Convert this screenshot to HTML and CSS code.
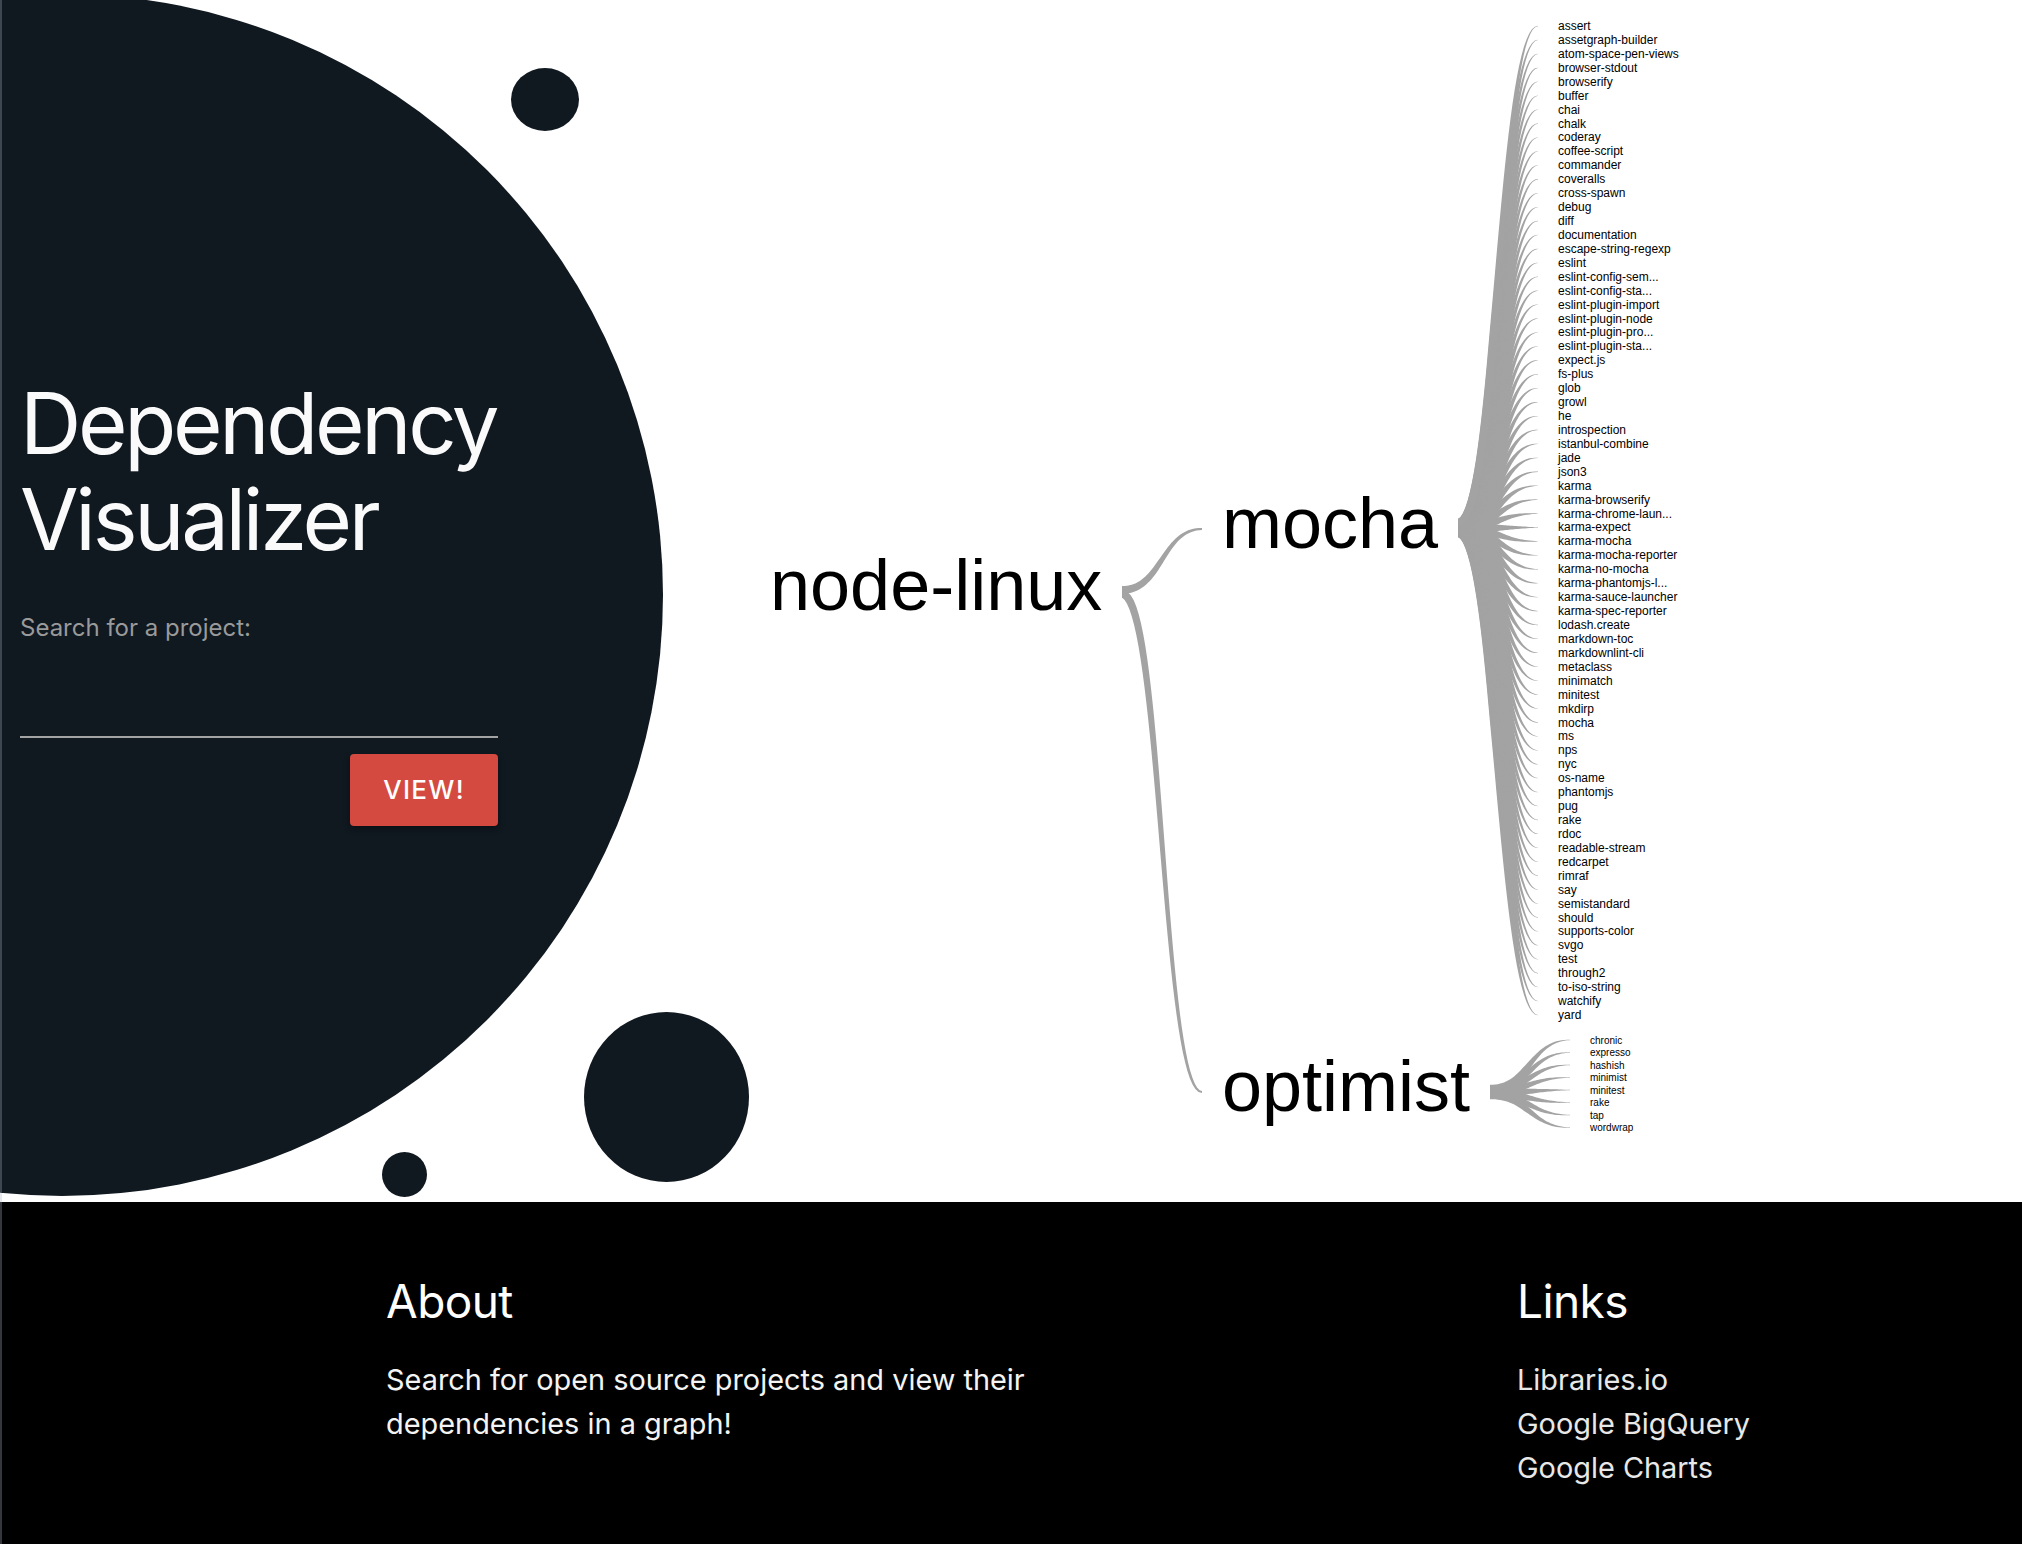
FILE: index.html
```html
<!DOCTYPE html>
<html>
<head>
    <meta charset="utf-8" />
    <meta name="viewport" content="width=device-width, initial-scale=1.0">
    <title>Dependency Visualizer</title>
    <link rel="stylesheet" href="styles.css">
</head>
<body>

    <main class="hero">
        <div class="blob blob-main"></div>
        <div class="blob blob-top"></div>
        <div class="blob blob-large"></div>
        <div class="blob blob-small"></div>

        <form class="search">
            <h1 class="search-title">Dependency Visualizer</h1>
            <label class="search-label" for="project">Search for a project:</label>
            <input class="search-input" id="project" type="text">
            <button class="search-button" type="button">VIEW!</button>
        </form>

        <svg class="chart" id="chart" viewBox="722 0 1300 1202" width="1300" height="1202">
            <text class="node" x="770" y="610">node-linux</text>
            <text class="node" x="1222" y="548">mocha</text>
            <text class="node" x="1222" y="1111">optimist</text>

            <g class="leaves" data-source="1458,528" data-spread="0.16" data-end="1538" data-x="1558" data-y="26" data-step="13.93" data-scale="1">
                <text>assert</text>
                <text>assetgraph-builder</text>
                <text>atom-space-pen-views</text>
                <text>browser-stdout</text>
                <text>browserify</text>
                <text>buffer</text>
                <text>chai</text>
                <text>chalk</text>
                <text>coderay</text>
                <text>coffee-script</text>
                <text>commander</text>
                <text>coveralls</text>
                <text>cross-spawn</text>
                <text>debug</text>
                <text>diff</text>
                <text>documentation</text>
                <text>escape-string-regexp</text>
                <text>eslint</text>
                <text>eslint-config-sem...</text>
                <text>eslint-config-sta...</text>
                <text>eslint-plugin-import</text>
                <text>eslint-plugin-node</text>
                <text>eslint-plugin-pro...</text>
                <text>eslint-plugin-sta...</text>
                <text>expect.js</text>
                <text>fs-plus</text>
                <text>glob</text>
                <text>growl</text>
                <text>he</text>
                <text>introspection</text>
                <text>istanbul-combine</text>
                <text>jade</text>
                <text>json3</text>
                <text>karma</text>
                <text>karma-browserify</text>
                <text>karma-chrome-laun...</text>
                <text>karma-expect</text>
                <text>karma-mocha</text>
                <text>karma-mocha-reporter</text>
                <text>karma-no-mocha</text>
                <text>karma-phantomjs-l...</text>
                <text>karma-sauce-launcher</text>
                <text>karma-spec-reporter</text>
                <text>lodash.create</text>
                <text>markdown-toc</text>
                <text>markdownlint-cli</text>
                <text>metaclass</text>
                <text>minimatch</text>
                <text>minitest</text>
                <text>mkdirp</text>
                <text>mocha</text>
                <text>ms</text>
                <text>nps</text>
                <text>nyc</text>
                <text>os-name</text>
                <text>phantomjs</text>
                <text>pug</text>
                <text>rake</text>
                <text>rdoc</text>
                <text>readable-stream</text>
                <text>redcarpet</text>
                <text>rimraf</text>
                <text>say</text>
                <text>semistandard</text>
                <text>should</text>
                <text>supports-color</text>
                <text>svgo</text>
                <text>test</text>
                <text>through2</text>
                <text>to-iso-string</text>
                <text>watchify</text>
                <text>yard</text>
            </g>

            <g class="leaves leaves-small" data-source="1490,1092" data-spread="1.2" data-end="1570" data-x="1590" data-y="1040" data-step="12.5" data-scale="0.8">
                <text>chronic</text>
                <text>expresso</text>
                <text>hashish</text>
                <text>minimist</text>
                <text>minitest</text>
                <text>rake</text>
                <text>tap</text>
                <text>wordwrap</text>
            </g>
        </svg>
    </main>

    <footer class="footer">
        <section class="footer-about">
            <h2 class="footer-title">About</h2>
            <p class="footer-text">Search for open source projects and view their dependencies in a graph!</p>
        </section>
        <section class="footer-links">
            <h2 class="footer-title">Links</h2>
            <a class="footer-link" href="#">Libraries.io</a>
            <a class="footer-link" href="#">Google BigQuery</a>
            <a class="footer-link" href="#">Google Charts</a>
        </section>
    </footer>

    <script src="sankey.js"></script>
</body>
</html>
```

FILE: styles.css
```css
html, body {
    --ink: #101820;
    --red: #d44a40;
    --link: #a3a3a3;

    font-family: Inter, "Liberation Sans", sans-serif;
    background-color: #fff;
    margin: 0;
    padding: 0;
}

body {
    position: relative;
}

/* thin strip down the left edge of the window */
body::before {
    content: "";
    position: absolute;
    top: 0;
    bottom: 0;
    left: 0;
    width: 2px;
    background-color: rgba(170, 180, 195, 0.3);
    z-index: 2;
}

.hero {
    display: flex;
    justify-content: space-between;
    height: 1202px;
    position: relative;
    overflow: hidden;
}

.blob {
    position: absolute;
    background-color: var(--ink);
    border-radius: 50%;
}

.blob-main {
    top: -6px;
    left: -539px;
    width: 1202px;
    height: 1202px;
}

.blob-top {
    top: 68px;
    left: 511px;
    width: 68px;
    height: 63px;
}

.blob-large {
    top: 1012px;
    left: 584px;
    width: 165px;
    height: 170px;
}

.blob-small {
    top: 1152px;
    left: 382px;
    width: 45px;
    height: 45px;
}

.search {
    display: flex;
    flex-direction: column;
    width: 478px;
    position: relative;
    margin-left: 20px;
    padding-top: 376px;
}

.search-title {
    color: #fafafa;
    font-size: 85px;
    font-weight: 400;
    letter-spacing: -3.3px;
    line-height: 96px;
    margin: 0 0 42px 0;
}

.search-label {
    color: #9a9a9a;
    font-size: 24px;
    line-height: 36px;
}

.search-input {
    all: unset;
    display: block;
    height: 90px;
    border-bottom: 2px solid #a3a3a3;
}

.search-button {
    align-self: flex-end;
    width: 148px;
    height: 72px;
    color: #fff;
    font-family: inherit;
    font-size: 26px;
    font-weight: 500;
    letter-spacing: 1.3px;
    background-color: var(--red);
    border: none;
    border-radius: 4px;
    box-shadow: 0 3px 6px rgba(0, 0, 0, 0.35);
    margin-top: 16px;
    padding: 0 0 2px 0;
}

.chart {
    display: block;
    flex: none;
    font-family: "Liberation Sans", Arial, sans-serif;
    position: relative;
}

.chart path {
    fill: var(--link);
}

.node {
    font-size: 72px;
    fill: #000;
}

.leaves text {
    font-size: 12px;
    fill: #000;
}

.leaves-small text {
    font-size: 10px;
}

.footer {
    display: flex;
    height: 342px;
    box-sizing: border-box;
    color: #fff;
    background-color: #000;
    padding: 71px 0 0 386px;
}

.footer-about {
    width: 1131px;
}

.footer-title {
    font-size: 46px;
    font-weight: 400;
    letter-spacing: -0.6px;
    line-height: 56px;
    margin: 0 0 29px 0;
}

.footer-text {
    width: 660px;
    color: #f4f4f4;
    font-size: 28.9px;
    line-height: 44px;
    margin: 0;
}

.footer-link {
    display: block;
    color: #e8e8e8;
    font-size: 28.9px;
    line-height: 44px;
    text-decoration: none;
}
```

FILE: sankey.js
```js
const SVG_NS = "http://www.w3.org/2000/svg";
const chart = document.getElementById("chart");

// Ribbon from (sx, sy) to (tx, ty), widthAt(t) gives its width along the way
function drawLink(sx, sy, tx, ty, widthAt) {
    const mid = (sx + tx) / 2,
        steps = 40,
        left = [],
        right = [];

    for (let i = 0; i <= steps; i++) {
        const t = i / steps,
            u = 1 - t;
        const x = u * u * u * sx + 3 * u * u * t * mid + 3 * u * t * t * mid + t * t * t * tx;
        const y = u * u * u * sy + 3 * u * u * t * sy + 3 * u * t * t * ty + t * t * t * ty;
        const dx = 3 * u * u * (mid - sx) + 3 * t * t * (tx - mid);
        const dy = 6 * u * t * (ty - sy);
        const len = Math.hypot(dx, dy) || 1;
        const half = widthAt(t) / 2;

        left.push((x - dy / len * half).toFixed(2) + " " + (y + dx / len * half).toFixed(2));
        right.unshift((x + dy / len * half).toFixed(2) + " " + (y - dx / len * half).toFixed(2));
    }

    const path = document.createElementNS(SVG_NS, "path");
    path.setAttribute("d", "M" + left.concat(right).join("L") + "Z");
    chart.insertBefore(path, chart.firstChild);
}

// Top level links
drawLink(1122, 590, 1202, 529, t => 8 - 6 * t);
drawLink(1122, 594, 1202, 1092, t => 8 - 6 * t);

// One link per label in each group
for (let group of document.querySelectorAll(".leaves")) {
    const source = group.dataset.source.split(",").map(Number),
        spread = Number(group.dataset.spread),
        end = Number(group.dataset.end),
        labels = group.querySelectorAll("text"),
        step = Number(group.dataset.step),
        first = Number(group.dataset.y),
        scale = Number(group.dataset.scale);

    labels.forEach(function(label, i) {
        const y = first + i * step;
        label.setAttribute("x", group.dataset.x);
        label.setAttribute("y", y);
        label.setAttribute("dominant-baseline", "central");
        drawLink(source[0], source[1] + (i - (labels.length - 1) / 2) * spread, end, y,
            t => scale * Math.min(7, 12 * (1 - t)) + 0.3);
    });
}
```
